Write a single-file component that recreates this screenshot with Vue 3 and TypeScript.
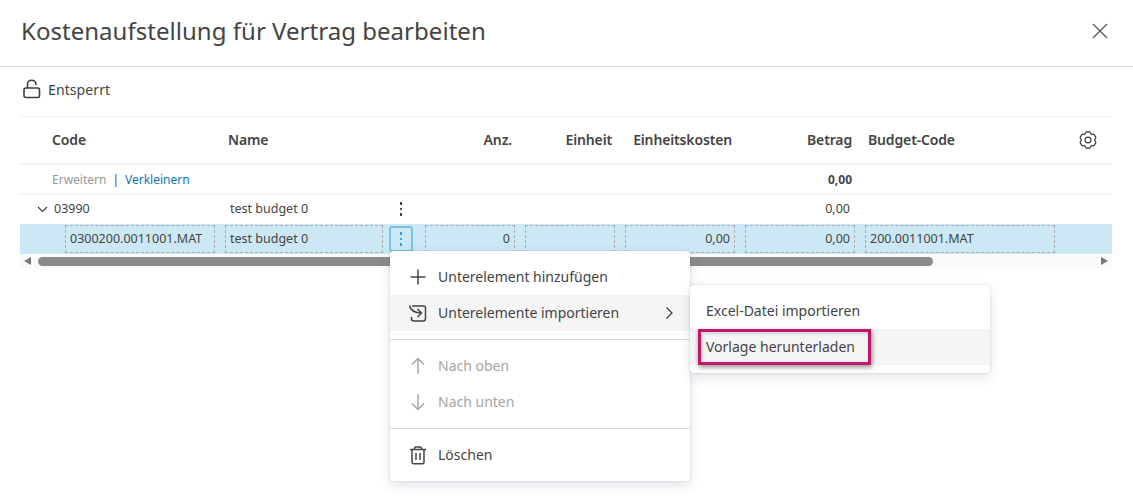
<template>
  <div class="page">
    <header class="title-bar">
      <h1 class="title">Kostenaufstellung für Vertrag bearbeiten</h1>
      <svg class="close" width="16" height="16" viewBox="0 0 16 16">
        <path d="M1 1l14 14M15 1L1 15" />
      </svg>
    </header>

    <div class="toolbar">
      <svg class="lock" width="18" height="20" viewBox="0 0 18 20">
        <path d="M4.500 9V5.200C4.500 2.900 6.300 1.200 8.700 1.200s4.200 1.700 4.200 4V6" />
        <rect x="1" y="9" width="15.500" height="9.500" rx="2" />
      </svg>
      <span>Entsperrt</span>
    </div>

    <div class="table">
      <div class="row head">
        <div class="cell code"><span>Code</span></div>
        <div class="cell name">Name</div>
        <div class="cell menu"></div>
        <div class="cell num">Anz.</div>
        <div class="cell unit">Einheit</div>
        <div class="cell cost">Einheitskosten</div>
        <div class="cell amount">Betrag</div>
        <div class="cell budget">Budget-Code</div>
        <div class="cell tail">
          <svg class="gear" width="18" height="18" viewBox="0 0 18 18">
            <path d="M7.130.92h3.740L12.300 3.280l2.770.06 1.870 3.240L15.600 9l1.340 2.420-1.870 3.240-2.770.06-1.430 2.360H7.130L5.700 14.720l-2.770-.06-1.870-3.240L2.400 9 1.060 6.580l1.870-3.240 2.770-.06z" />
            <circle cx="9" cy="9" r="2.900" />
          </svg>
        </div>
      </div>

      <div class="row summary">
        <div class="cell code">
          <span class="muted">Erweitern</span>
          <span class="sep">|</span>
          <span class="link">Verkleinern</span>
        </div>
        <div class="cell name"></div>
        <div class="cell menu"></div>
        <div class="cell num"></div>
        <div class="cell unit"></div>
        <div class="cell cost"></div>
        <div class="cell amount strong">0,00</div>
        <div class="cell budget"></div>
        <div class="cell tail"></div>
      </div>

      <div class="row parent">
        <div class="cell code">
          <svg class="chevron-down" width="11" height="7" viewBox="0 0 11 7">
            <path d="M1 1l4.500 4.500L10 1" />
          </svg>
          <span>03990</span>
        </div>
        <div class="cell name">test budget 0</div>
        <div class="cell menu">
          <span class="kebab"><i></i><i></i><i></i></span>
        </div>
        <div class="cell num"></div>
        <div class="cell unit"></div>
        <div class="cell cost"></div>
        <div class="cell amount">0,00</div>
        <div class="cell budget"></div>
        <div class="cell tail"></div>
      </div>

      <div class="row editing">
        <div class="cell code"><div class="field">0300200.0011001.MAT</div></div>
        <div class="cell name"><div class="field">test budget 0</div></div>
        <div class="cell menu">
          <span class="kebab active"><i></i><i></i><i></i></span>
        </div>
        <div class="cell num"><div class="field right">0</div></div>
        <div class="cell unit"><div class="field"></div></div>
        <div class="cell cost"><div class="field right">0,00</div></div>
        <div class="cell amount"><div class="field right">0,00</div></div>
        <div class="cell budget"><div class="field">200.0011001.MAT</div></div>
        <div class="cell tail"></div>
      </div>

      <div class="scrollbar">
        <span class="arrow-left"></span>
        <div class="track"><div class="thumb"></div></div>
        <span class="arrow-right"></span>
      </div>
    </div>

    <div class="popup main-menu">
      <div class="item">
        <svg class="item-icon" width="20" height="20" viewBox="0 0 20 20">
          <path d="M10 2.500v15M2.500 10h15" />
        </svg>
        <span>Unterelement hinzufügen</span>
      </div>
      <div class="item hover">
        <svg class="item-icon" width="20" height="20" viewBox="0 0 20 20">
          <path d="M4 3h11.500a2 2 0 0 1 2 2v10.500a2.500 2.500 0 0 1-2.500 2.500H6a2.500 2.500 0 0 1-2.500-2.500V14" />
          <path d="M1.500 2.500C2.500 7 6 10 13.500 10M9.500 6l4 4-4 4" />
        </svg>
        <span>Unterelemente importieren</span>
        <svg class="chevron-right" width="9" height="14" viewBox="0 0 9 14">
          <path d="M1.500 1.500L7 7l-5.500 5.500" />
        </svg>
      </div>
      <div class="divider"></div>
      <div class="item disabled">
        <svg class="item-icon" width="20" height="20" viewBox="0 0 20 20">
          <path d="M10 18V2.500M4 8.500l6-6 6 6" />
        </svg>
        <span>Nach oben</span>
      </div>
      <div class="item disabled">
        <svg class="item-icon" width="20" height="20" viewBox="0 0 20 20">
          <path d="M10 2v15.500M4 11.500l6 6 6-6" />
        </svg>
        <span>Nach unten</span>
      </div>
      <div class="divider"></div>
      <div class="item">
        <svg class="item-icon" width="20" height="20" viewBox="0 0 20 20">
          <path d="M2 4.500h16M6.500 4.500V3.500c0-1 .6-1.500 1.500-1.500h4c.9 0 1.500.5 1.500 1.500v1M4 4.500v12.800c0 .9.600 1.500 1.500 1.500h9c.9 0 1.500-.6 1.500-1.500V4.500M8 8v7M12 8v7" />
        </svg>
        <span>Löschen</span>
      </div>
    </div>

    <div class="popup sub-menu">
      <div class="item"><span>Excel-Datei importieren</span></div>
      <div class="item hover"><span>Vorlage herunterladen</span></div>
    </div>

    <div class="callout"></div>
  </div>
</template>

<script setup lang="ts">
</script>

<style>
body {
  background: #fff;
}
</style>

<style scoped>
.page {
  position: relative;
  width: 1133px;
  height: 497px;
  overflow: hidden;
  background: #fff;
  color: #444;
  font-family: "Noto Sans", sans-serif;
  font-size: 13px;
}

.title-bar {
  display: flex;
  align-items: center;
  justify-content: space-between;
  height: 67px;
  padding: 0 25px 5px 21px;
  box-sizing: border-box;
  border-bottom: 1px solid #dcdcdc;
}

.title {
  margin: 0;
  font-size: 24px;
  font-weight: 400;
  letter-spacing: 0.03px;
  color: #444;
}

.close path {
  fill: none;
  stroke: #555;
  stroke-width: 1.2;
}

.toolbar {
  display: flex;
  align-items: center;
  gap: 7px;
  height: 50px;
  margin: 0 21px 0 20px;
  padding: 0 0 5px 3px;
  box-sizing: border-box;
  font-size: 14px;
  letter-spacing: 0.1px;
  border-bottom: 1px solid #f2f2f2;
}

.lock {
  fill: none;
  stroke: #3c3c3c;
  stroke-width: 1.6;
}

.table {
  margin: 0 21px 0 20px;
}

.row {
  display: grid;
  grid-template-columns: 200px 168px 32px 100px 100px 120px 120px 200px 52px;
  align-items: center;
  box-sizing: border-box;
}

.cell {
  padding: 0 5px;
  box-sizing: border-box;
  min-width: 0;
  white-space: nowrap;
}

.num,
.unit,
.cost,
.amount {
  text-align: right;
  padding-right: 8px;
}

.head {
  height: 48px;
  border-bottom: 2px solid #f3f3f3;
  font-weight: 600;
  font-size: 14px;
  letter-spacing: -0.15px;
}

.head .cell:not(.tail) {
  padding-bottom: 2px;
}

.head .code {
  padding-left: 32px;
}

.head .name {
  padding-left: 8px;
}

.head .budget {
  padding-left: 8px;
}

.head .tail {
  display: flex;
  justify-content: flex-end;
  padding-right: 15px;
}

.gear {
  flex: none;
  fill: none;
  stroke: #3c3c3c;
  stroke-width: 1.2;
  stroke-linejoin: round;
}

.summary {
  height: 30px;
  border-bottom: 2px solid #f3f3f3;
  font-size: 12px;
}

.summary .code {
  padding-left: 32px;
}

.muted {
  color: #999;
}

.sep {
  margin: 0 6px;
}

.link {
  color: #0b78b4;
}

.strong {
  font-weight: 700;
  font-size: 12px;
}

.parent {
  height: 28px;
  font-size: 12.500px;
}

.parent .code {
  display: flex;
  align-items: center;
  gap: 6px;
  padding-left: 17px;
}

.parent .code span,
.parent .name,
.parent .amount {
  padding-bottom: 2px;
}

.parent .name {
  padding-left: 10px;
}

.parent .amount {
  padding-right: 10px;
}

.chevron-down path {
  fill: none;
  stroke: #3c3c3c;
  stroke-width: 1.1;
}

.kebab {
  display: flex;
  flex-direction: column;
  align-items: center;
  justify-content: center;
  gap: 3px;
  width: 24px;
  height: 26px;
  margin-left: -4px;
  box-sizing: border-box;
}

.kebab i {
  display: block;
  width: 2.500px;
  height: 2.500px;
  border-radius: 50%;
  background: #222;
}

.kebab.active {
  border: 2px solid #7cc1e6;
  border-radius: 3px;
}

.kebab.active i {
  background: #0696d7;
}

.editing {
  height: 30px;
  margin-top: 1px;
  background: #cce8f5;
  font-size: 12.500px;
}

.editing .code {
  padding-left: 45px;
}

.field {
  height: 28px;
  line-height: 26px;
  padding: 0 4px;
  box-sizing: border-box;
  border: 1px dashed #aaa;
  text-align: left;
}

.field.right {
  text-align: right;
}

.editing .cell.num,
.editing .cell.unit,
.editing .cell.cost,
.editing .cell.amount {
  padding-right: 5px;
}

.scrollbar {
  display: flex;
  align-items: center;
  height: 14px;
  padding: 0 4px;
  background: #fafafa;
}

.arrow-left {
  width: 0;
  height: 0;
  border: 4px solid transparent;
  border-left: 0;
  border-right: 7px solid #777;
}

.arrow-right {
  width: 0;
  height: 0;
  border: 4px solid transparent;
  border-right: 0;
  border-left: 7px solid #777;
}

.track {
  flex: 1;
  padding: 0 7px;
}

.thumb {
  width: 895px;
  height: 9px;
  border-radius: 5px;
  background: #8a8a8a;
}

.popup {
  position: absolute;
  width: 300px;
  padding: 8px 0;
  box-sizing: border-box;
  background: #fff;
  border-radius: 4px;
  box-shadow: 0 0 2px rgba(60, 70, 110, 0.25), 0 4px 12px rgba(60, 70, 110, 0.15);
  font-size: 14px;
}

.main-menu {
  left: 390px;
  top: 251px;
  height: 230px;
  z-index: 1;
}

.sub-menu {
  left: 690px;
  top: 285px;
  height: 88px;
  z-index: 2;
}

.item {
  display: flex;
  align-items: center;
  height: 36px;
  padding-left: 18px;
}

.item span {
  padding-bottom: 2px;
}

.item-icon {
  flex: none;
  margin-right: 10px;
  fill: none;
  stroke: #444;
  stroke-width: 1.5;
}

.hover {
  background: #f5f5f5;
}

.disabled {
  color: #a5a5a5;
}

.disabled .item-icon {
  stroke: #a5a5a5;
}

.chevron-right {
  margin-left: auto;
  margin-right: 16px;
  fill: none;
  stroke: #3c3c3c;
  stroke-width: 1.200;
}

.divider {
  height: 1px;
  margin: 8px 0;
  background: #dcdcdc;
}

.sub-menu .item {
  padding-left: 16px;
}

.callout {
  position: absolute;
  left: 698px;
  top: 329px;
  width: 173px;
  height: 36px;
  box-sizing: border-box;
  border: 3px solid #c2166b;
  box-shadow: 1px 2px 5px rgba(0, 0, 0, 0.45), inset 1px 1px 4px rgba(0, 0, 0, 0.2);
  z-index: 3;
}
</style>
